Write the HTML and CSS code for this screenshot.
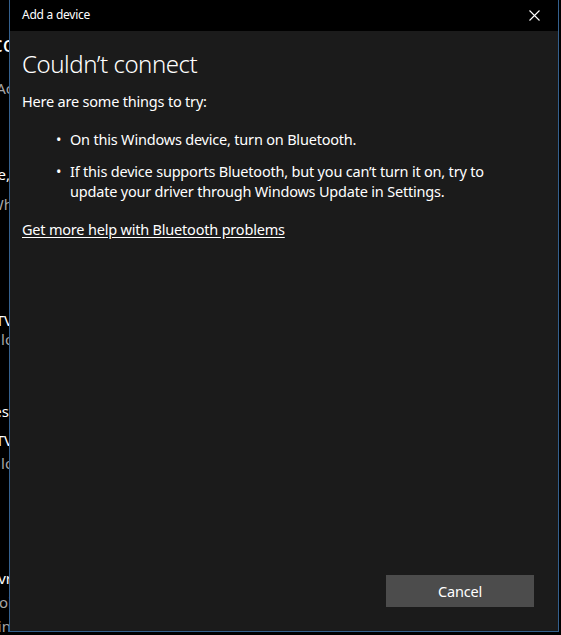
FILE: index.html
```html
<!DOCTYPE html>
<html lang="en">
<head>
<meta charset="utf-8">
<title>Add a device</title>
<link rel="stylesheet" href="styles.css">
</head>
<body>
<div class="screen">
  <div class="behind">
    <div class="bg-line big l1">Connected co</div>
    <div class="bg-line dim l2">Add a device Ac</div>
    <div class="bg-line l3">Other device,</div>
    <div class="bg-line dim l4">When Wh</div>
    <div class="bg-line l5">Smart TV</div>
    <div class="bg-line dim l6">Not connected lo</div>
    <div class="bg-line l7">Devices</div>
    <div class="bg-line l8">Smart TV</div>
    <div class="bg-line dim l9">Not connected lo</div>
    <div class="bg-line l10">Download ovr</div>
    <div class="bg-line dim l11">To download oi</div>
    <div class="bg-line dim l12">metered in</div>
  </div>
  <div class="dialog">
    <div class="titlebar">
      <span class="title">Add a device</span>
      <button class="close" aria-label="Close">
        <svg width="11" height="11" viewBox="0 0 11 11"><path d="M0.5 0.5 L10.5 10.5 M10.5 0.5 L0.5 10.5" stroke="#fff" stroke-width="1.1" fill="none"/></svg>
      </button>
    </div>
    <div class="content">
      <h1 class="heading">Couldn’t connect</h1>
      <p class="intro">Here are some things to try:</p>
      <ul class="tips">
        <li>On this Windows device, turn on Bluetooth.</li>
        <li>If this device supports Bluetooth, but you can’t turn it on, try to<br>update your driver through Windows Update in Settings.</li>
      </ul>
      <a class="help" href="#">Get more help with Bluetooth problems</a>
      <div class="spacer"></div>
      <div class="actions">
        <button class="cancel">Cancel</button>
      </div>
    </div>
  </div>
  <div class="edge"></div>
</div>
</body>
</html>
```
FILE: styles.css
```css
html, body {
  margin: 0;
  padding: 0;
  background: #000;
  height: 100%;
  overflow: hidden;
}
body {
  font-family: "Noto Sans", "Open Sans", sans-serif;
  color: #fff;
}
.screen {
  display: flex;
  width: 561px;
  height: 635px;
}
.behind {
  width: 9px;
  flex: none;
  overflow: hidden;
  display: flex;
  flex-direction: column;
  align-items: flex-end;
  font-size: 15px;
  line-height: 20px;
}
.bg-line {
  white-space: nowrap;
  margin-right: -4px;
  color: #fff;
}
.bg-line.dim { color: #a6a6a6; }
.bg-line.big { font-size: 22px; line-height: 24px; margin-right: -7px; }
.l1 { margin-top: 31px; }
.l2 { margin-top: 23px; }
.l3 { margin-top: 66px; margin-right: -1px; }
.l4 { margin-top: 10px; }
.l5 { margin-top: 96px; }
.l6 { margin-top: -1px; margin-right: -5px; }
.l7 { margin-top: 52px; margin-right: 0; }
.l8 { margin-top: 9px; }
.l9 { margin-top: 3px; margin-right: -5px; }
.l10 { margin-top: 95px; margin-right: -3px; }
.l11 { margin-top: 4px; margin-right: -3px; }
.l12 { margin-top: 4px; margin-right: -2px; }

.dialog {
  width: 548px;
  height: 631px;
  flex: none;
  border: 1px solid #34608e;
  border-top: none;
  display: flex;
  flex-direction: column;
  background: #1b1b1b;
}
.edge { flex: 1; }
.titlebar {
  height: 31px;
  flex: none;
  background: #000;
  display: flex;
  align-items: center;
  justify-content: space-between;
  padding: 0 18px 0 12px;
}
.title {
  font-size: 12px;
  line-height: 16px;
  letter-spacing: -0.25px;
  margin-top: -1px;
}
.close {
  background: none;
  border: none;
  padding: 0;
  width: 11px;
  height: 11px;
  display: flex;
}
.content {
  flex: 1;
  display: flex;
  flex-direction: column;
  padding: 0 24px 24px 12px;
  font-size: 14.5px;
  letter-spacing: -0.2px;
}
.heading {
  margin: 17px 0 0;
  font-size: 24px;
  line-height: 32px;
  font-weight: 300;
  letter-spacing: -0.45px;
}
.intro {
  margin: 11px 0 0;
  line-height: 20px;
}
.tips {
  margin: 18px 0 0;
  padding: 0 0 0 48px;
  list-style: none;
  line-height: 20px;
  display: flex;
  flex-direction: column;
  gap: 12px;
}
.tips li {
  position: relative;
}
.tips li::before {
  content: "•";
  position: absolute;
  left: -14px;
  top: 0;
}
.help {
  margin-top: 18px;
  align-self: flex-start;
  color: #fff;
  line-height: 20px;
  text-decoration: underline;
  text-underline-offset: 2px;
}
.spacer { flex: 1; }
.actions {
  display: flex;
  justify-content: flex-end;
}
.cancel {
  width: 148px;
  height: 32px;
  background: #4c4c4c;
  border: none;
  color: #fff;
  font-family: inherit;
  font-size: 14.5px;
  letter-spacing: -0.2px;
  padding: 0 0 1px;
}
```
